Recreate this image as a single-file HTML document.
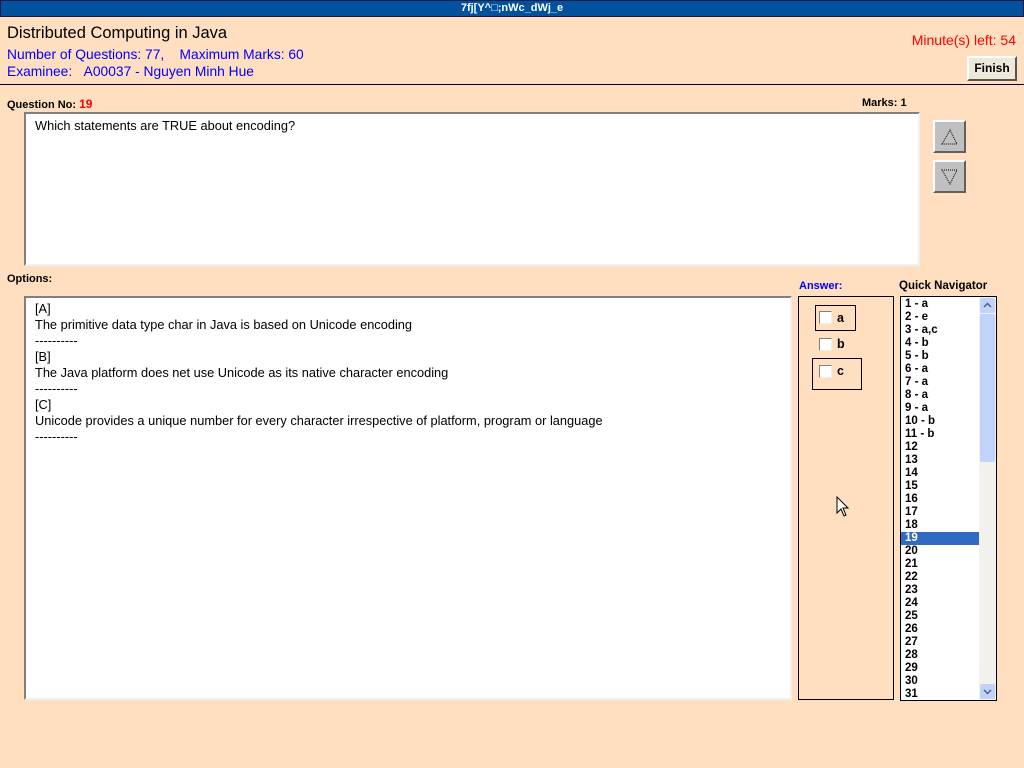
<!DOCTYPE html>
<html><head><style>
body{margin:0;width:1024px;height:768px;background:#FFDFBF;font-family:"Liberation Sans",sans-serif;position:relative;overflow:hidden;font-size:12px}
.a{position:absolute;white-space:nowrap}
.tb{left:0;top:0;width:1022px;height:15px;background:#00519E;border:1px solid #1a1a40;color:#fff;font-weight:bold;font-size:11px;text-align:center;line-height:15px}
.box{position:absolute;background:#fff;border:2px solid;border-color:#808080 #f0f0f0 #f0f0f0 #808080;box-sizing:border-box}
.b{font-weight:bold;font-size:11px}
.blue{color:#0000ff}
.nav div{height:13px;line-height:13px;font-weight:bold;font-size:11.5px;padding-left:4px}
.btn{position:absolute;background:#c0c0c0;border:2px solid;border-color:#fff #606060 #606060 #fff;box-sizing:border-box}
.cb{position:absolute;width:11px;height:11px;border:1px solid;border-color:#808080 #eee #eee #808080;background:#fff}
</style></head><body>
<div class="a tb">7fj[Y^□;nWc_dWj_e</div>
<div class="a" style="left:7px;top:24px;font-size:16.5px">Distributed Computing in Java</div>
<div class="a blue" style="left:7px;top:47px;font-size:13.8px">Number of Questions: 77, &nbsp;&nbsp;&nbsp;Maximum Marks: 60</div>
<div class="a blue" style="left:7px;top:64px;font-size:13.8px">Examinee: &nbsp;&nbsp;A00037 - Nguyen Minh Hue</div>
<div class="a" style="right:8px;top:32px;color:#f00;font-size:14px">Minute(s) left: 54</div>
<div class="btn" style="left:967px;top:56px;width:50px;height:25px;background:#ece9d8;border-color:#fff #555 #555 #fff;font-size:12px;font-weight:bold;text-align:center;line-height:21px">Finish</div>
<div class="a" style="left:0;top:84px;width:1024px;height:1px;background:#000"></div>
<div class="a b" style="left:7px;top:97px">Question No: <span style="color:#f00;font-size:12px">19</span></div>
<div class="a b" style="left:862px;top:97px">Marks: 1</div>
<div class="box" style="left:24px;top:112px;width:896px;height:154px"><div style="padding:4px 9px;font-size:12.8px">Which statements are TRUE about encoding?</div></div>
<div class="btn" style="left:933px;top:120px;width:33px;height:33px"><svg width="29" height="29"><path d="M7 22 L15 8 L22 22 Z" fill="none" stroke="#000" stroke-dasharray="1 1"/></svg></div>
<div class="btn" style="left:933px;top:160px;width:33px;height:33px"><svg width="29" height="29"><path d="M7 8 L22 8 L15 22 Z" fill="none" stroke="#000" stroke-dasharray="1 1"/></svg></div>
<div class="a b" style="left:7px;top:273px">Options:</div>
<div class="box" style="left:24px;top:296px;width:768px;height:404px"><div style="padding:3px 9px;line-height:16px;font-size:12.8px">[A]<br>The primitive data type char in Java is based on Unicode encoding<br>----------<br>[B]<br>The Java platform does net use Unicode as its native character encoding<br>----------<br>[C]<br>Unicode provides a unique number for every character irrespective of platform, program or language<br>----------</div></div>
<div class="a b blue" style="left:799px;top:280px">Answer:</div>
<div class="a" style="left:798px;top:296px;width:94px;height:402px;border:1px solid #000"></div>
<div class="a" style="left:815px;top:305px;width:39px;height:24px;border:1px solid #000"></div>
<div class="cb" style="left:819px;top:311px"></div><div class="a b" style="left:837px;top:311px;font-size:12.5px">a</div>
<div class="cb" style="left:819px;top:338px"></div><div class="a b" style="left:837px;top:337px;font-size:12.5px">b</div>
<div class="a" style="left:812px;top:358px;width:48px;height:30px;border:1px solid #000"></div>
<div class="cb" style="left:819px;top:365px"></div><div class="a b" style="left:837px;top:364px;font-size:12.5px">c</div>
<svg class="a" style="left:836px;top:496px" width="14" height="22"><path d="M1 1 L1 17 L5 13 L8 20 L10 19 L7 12 L12 12 Z" fill="#fff" stroke="#000"/></svg>
<div class="a b" style="left:899px;top:280px;font-size:11.5px">Quick Navigator</div>
<div class="a" style="left:900px;top:296px;width:95px;height:403px;border:1px solid #000;background:#fff;overflow:hidden">
<div class="nav" style="position:absolute;left:0;top:1px;width:78px">
<div>1 - a</div><div>2 - e</div><div>3 - a,c</div><div>4 - b</div><div>5 - b</div><div>6 - a</div><div>7 - a</div><div>8 - a</div><div>9 - a</div><div>10 - b</div><div>11 - b</div><div>12</div><div>13</div><div>14</div><div>15</div><div>16</div><div>17</div><div>18</div><div style="background:#316AC5;color:#fff">19</div><div>20</div><div>21</div><div>22</div><div>23</div><div>24</div><div>25</div><div>26</div><div>27</div><div>28</div><div>29</div><div>30</div><div>31</div></div>
<div style="position:absolute;right:0;top:0;width:17px;height:403px;background:#F3F1EC"></div>
<div style="position:absolute;right:1px;top:1px;width:15px;height:15px;background:#C1D3FB;border-radius:2px"><svg width="15" height="15"><path d="M4 9 L7.5 5.5 L11 9" fill="none" stroke="#4d6185" stroke-width="1.5"/></svg></div>
<div style="position:absolute;right:1px;top:17px;width:15px;height:148px;background:#C1D3FB;border-radius:2px"></div>
<div style="position:absolute;right:1px;bottom:1px;width:15px;height:15px;background:#C1D3FB;border-radius:2px"><svg width="15" height="15"><path d="M4 6 L7.5 9.5 L11 6" fill="none" stroke="#4d6185" stroke-width="1.5"/></svg></div>
</div>
</body></html>
